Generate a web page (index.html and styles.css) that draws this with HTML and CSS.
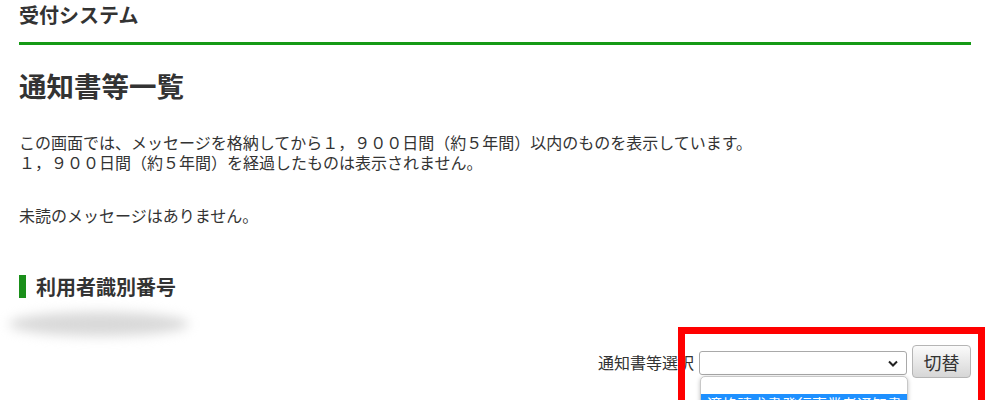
FILE: index.html
```html
<!DOCTYPE html>
<html lang="ja">
<head>
    <meta charset="UTF-8">
    <meta name="viewport" content="width=device-width, initial-scale=1.0">
    <title>通知書等一覧</title>
    <link rel="stylesheet" href="styles.css">
</head>
<body>
    <div class="page">
        <!-- ヘッダー -->
        <div class="site-header">受付システム</div>

        <h1>通知書等一覧</h1>

        <p class="notice">
            この画面では、メッセージを格納してから１，９００日間（約５年間）以内のものを表示しています。<br>
            １，９００日間（約５年間）を経過したものは表示されません。
        </p>

        <p class="unread">未読のメッセージはありません。</p>

        <h2>利用者識別番号</h2>
        <div class="user-id"><span class="blur"></span></div>

        <!-- 通知書等の切替 -->
        <div class="select-row">
            <label class="select-label">通知書等選択</label>
            <div class="picker">
                <div class="select-box">
                    <svg width="10" height="7" viewBox="0 0 10 7"><path d="M1 1.5 L5 5.5 L9 1.5" fill="none" stroke="#222" stroke-width="2"/></svg>
                    <div class="dropdown">
                        <div class="option"></div>
                        <div class="option selected">適格請求書発行事業者通知書</div>
                    </div>
                </div>
                <button class="switch-btn">切替</button>
                <div class="highlight"></div>
            </div>
        </div>
    </div>
</body>
</html>
```

FILE: styles.css
```css
body {
    margin: 0;
    font-family: "Noto Sans CJK JP", "Noto Sans", sans-serif;
    color: #333;
    background-color: #fff;
    overflow: hidden;
}

.page {
    padding: 0 29px 0 19px;
    height: 400px;
    overflow: hidden;
}

.site-header {
    font-size: 20px;
    font-weight: bold;
    line-height: 30px;
    padding-bottom: 12px;
    border-bottom: 3px solid #169a16;
}

h1 {
    font-size: 27.5px;
    line-height: 36px;
    margin: 22px 0 0;
}

.notice {
    font-size: 16px;
    line-height: 20px;
    margin: 29px 0 0;
}

.unread {
    font-size: 16px;
    line-height: 20px;
    margin: 33px 0 0;
}

h2 {
    font-size: 20px;
    line-height: 23px;
    margin: 50px 0 0;
    padding-left: 10px;
    border-left: 7px solid #1a8f1a;
}

.user-id {
    height: 26px;
    margin: 14px 0 0 -10px;
}

.blur {
    display: block;
    width: 180px;
    height: 24px;
    border-radius: 50%;
    background-color: #d9d9d9;
    filter: blur(6px);
}

.select-row {
    display: flex;
    justify-content: flex-end;
    align-items: center;
    gap: 5px;
    margin-top: 7px;
}

.select-label {
    font-size: 16px;
    line-height: 20px;
}

.picker {
    position: relative;
    display: flex;
    align-items: center;
    gap: 5px;
}

.select-box {
    position: relative;
    box-sizing: border-box;
    width: 208px;
    height: 24px;
    margin-top: 3px;
    padding-right: 8px;
    display: flex;
    align-items: center;
    justify-content: flex-end;
    border: 1px solid #a9a9a9;
    border-radius: 3px;
    background-color: #fff;
}

.dropdown {
    position: absolute;
    top: 24px;
    left: 0;
    width: 206px;
    background-color: #fff;
    border: 1px solid #c8c8c8;
    border-radius: 5px;
    box-shadow: 0 1px 4px rgba(0, 0, 0, 0.25);
    overflow: hidden;
}

.option {
    height: 17px;
    font-size: 15px;
    line-height: 20px;
    padding-left: 6px;
}

.option.selected {
    height: 22px;
    color: #fff;
    background-color: #1e90ff;
}

.switch-btn {
    box-sizing: border-box;
    width: 59px;
    height: 33px;
    font-family: inherit;
    font-size: 18px;
    color: #333;
    background: linear-gradient(#fbfbfb, #d6d6d6);
    border: 1px solid #b5b5b5;
    border-radius: 4px;
    padding: 0;
}

.highlight {
    position: absolute;
    top: -18px;
    left: -21px;
    box-sizing: border-box;
    width: 307px;
    height: 110px;
    border: 7px solid #ff0000;
    pointer-events: none;
}
```
